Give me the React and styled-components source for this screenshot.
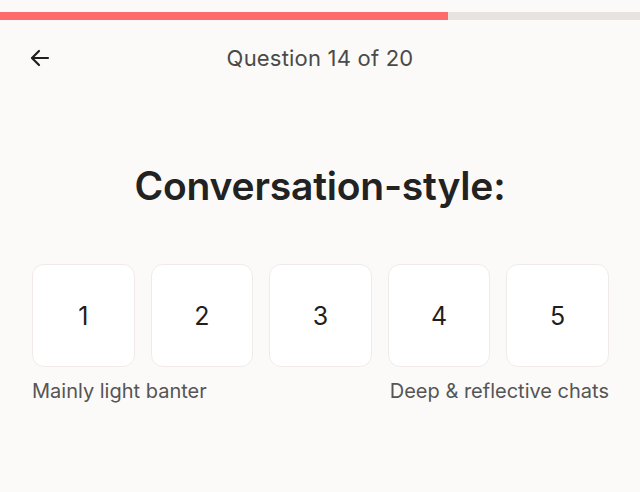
import React, { useState } from 'react';
import styled, { createGlobalStyle } from 'styled-components';

const GlobalStyle = createGlobalStyle`
    html, body {
        margin: 0;
        padding: 0;
        background: #fbfaf8;
    }
    body {
        font-family: Inter, "Noto Sans", sans-serif;
        -webkit-font-smoothing: antialiased;
    }
`;

const Page = styled.div`
    width: 640px;
    height: 492px;
    background: #fbfaf8;
    padding-top: 12px;
    box-sizing: border-box;
    display: flex;
    flex-direction: column;
`;

const Track = styled.div`
    height: 8px;
    background: #e7e3e0;
`;

const Fill = styled.div`
    height: 100%;
    background: #ff6b6b;
`;

const Header = styled.div`
    display: grid;
    grid-template-columns: 60px 1fr 60px;
    align-items: center;
    height: 60px;
    margin-top: 8px;
    padding: 0 26px;
`;

const BackButton = styled.button`
    width: 28px;
    height: 28px;
    padding: 0;
    border: none;
    background: none;
    display: flex;
    align-items: center;
    justify-content: center;
    cursor: pointer;
    color: #1f1f1f;
`;

const Counter = styled.div`
    text-align: center;
    font-size: 22px;
    color: #4a4a4a;
    letter-spacing: 0.2px;
`;

const Title = styled.h1`
    margin: 74px 0 0 0;
    text-align: center;
    font-size: 39px;
    font-weight: 600;
    color: #222;
    letter-spacing: -0.2px;
`;

const Scale = styled.div`
    display: grid;
    grid-template-columns: repeat(5, 1fr);
    gap: 16px;
    padding: 0 31px 0 32px;
    margin-top: 55px;
`;

const Option = styled.button`
    height: 103px;
    border-radius: 12px;
    border: 1px solid ${props => props.selected ? '#ff6b6b' : '#f0ebe8'};
    background: ${props => props.selected ? '#fff1f0' : '#ffffff'};
    font-family: Inter, "Noto Sans", sans-serif;
    font-size: 25px;
    color: #1f1f1f;
    cursor: pointer;
`;

const Labels = styled.div`
    display: flex;
    justify-content: space-between;
    padding: 0 31px 0 32px;
    margin-top: 12px;
    font-size: 20px;
    color: #555;
`;

const App = () => {
    const [value, setValue] = useState(null);
    const current = 14;
    const total = 20;

    return (
        <Page>
            <GlobalStyle />
            <Track>
                <Fill style={{ width: `${(current / total) * 100}%` }} />
            </Track>
            <Header>
                <BackButton aria-label="Back">
                    <svg width="24" height="24" viewBox="0 0 24 24" fill="none" stroke="currentColor" strokeWidth="2.2" strokeLinecap="round" strokeLinejoin="round">
                        <path d="M20 12H4.5" />
                        <path d="M11 5l-7 7 7 7" />
                    </svg>
                </BackButton>
                <Counter>Question {current} of {total}</Counter>
                <div />
            </Header>
            <Title>Conversation-style:</Title>
            <Scale>
                {[1, 2, 3, 4, 5].map(n => (
                    <Option key={n} selected={value === n} onClick={() => setValue(n)}>
                        {n}
                    </Option>
                ))}
            </Scale>
            <Labels>
                <span>Mainly light banter</span>
                <span>Deep &amp; reflective chats</span>
            </Labels>
        </Page>
    );
};

export default App;
